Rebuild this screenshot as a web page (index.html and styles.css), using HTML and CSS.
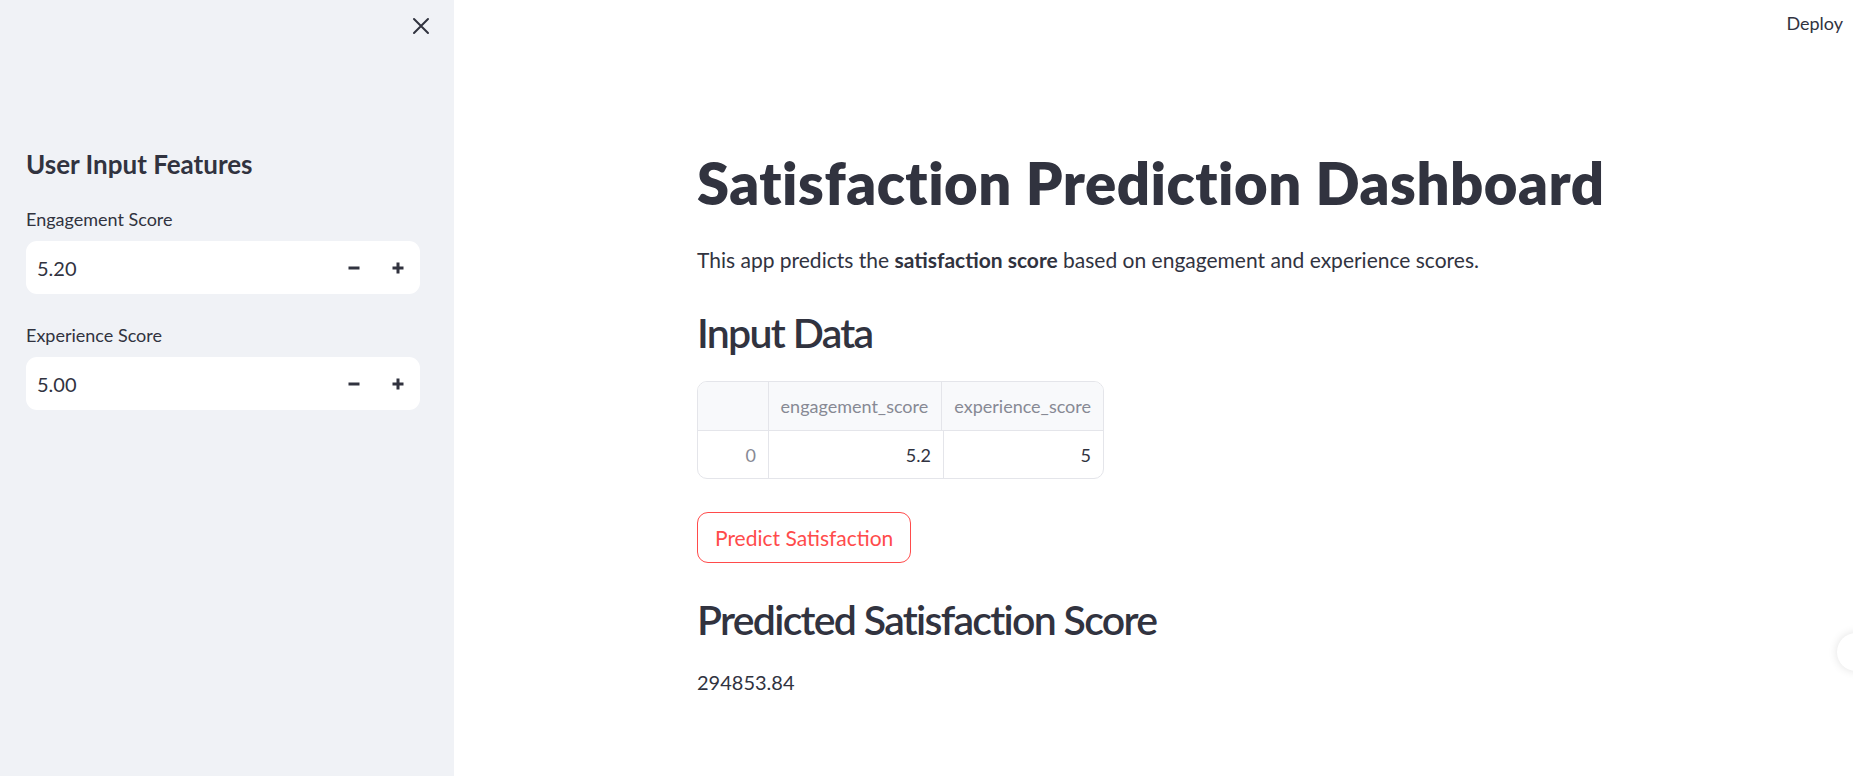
FILE: index.html
```html
<!DOCTYPE html>
<html lang="en">
<head>
<meta charset="utf-8">
<title>Satisfaction Prediction Dashboard</title>
<link rel="stylesheet" href="styles.css">
</head>
<body>
<div class="app">
  <aside class="sidebar">
    <div class="sidebar-top">
      <button class="close-btn" aria-label="Close sidebar">
        <svg width="18" height="18" viewBox="0 0 18 18"><path d="M2 2 L16 16 M16 2 L2 16" stroke="#31333f" stroke-width="2" stroke-linecap="round"/></svg>
      </button>
    </div>
    <div class="sidebar-content">
      <h2 class="side-title">User Input Features</h2>
      <div class="field">
        <label class="field-label">Engagement Score</label>
        <div class="num-input">
          <span class="num-value">5.20</span>
          <button class="step" aria-label="minus"><svg width="12" height="12" viewBox="0 0 12 12"><rect x="0.5" y="4.5" width="11" height="3" fill="#31333f"/></svg></button>
          <button class="step" aria-label="plus"><svg width="12" height="12" viewBox="0 0 12 12"><rect x="0.5" y="4.5" width="11" height="3" fill="#31333f"/><rect x="4.5" y="0.5" width="3" height="11" fill="#31333f"/></svg></button>
        </div>
      </div>
      <div class="field">
        <label class="field-label">Experience Score</label>
        <div class="num-input">
          <span class="num-value">5.00</span>
          <button class="step" aria-label="minus"><svg width="12" height="12" viewBox="0 0 12 12"><rect x="0.5" y="4.5" width="11" height="3" fill="#31333f"/></svg></button>
          <button class="step" aria-label="plus"><svg width="12" height="12" viewBox="0 0 12 12"><rect x="0.5" y="4.5" width="11" height="3" fill="#31333f"/><rect x="4.5" y="0.5" width="3" height="11" fill="#31333f"/></svg></button>
        </div>
      </div>
    </div>
  </aside>
  <main class="main">
    <header class="topbar"><span class="deploy">Deploy</span></header>
    <div class="content">
      <h1 class="title">Satisfaction Prediction Dashboard</h1>
      <p class="lead">This app predicts the <strong>satisfaction score</strong> based on engagement and experience scores.</p>
      <h2 class="h2 h2-input">Input Data</h2>
      <div class="table">
        <div class="row head">
          <div class="cell c0"></div>
          <div class="cell c1">engagement_score</div>
          <div class="cell c2">experience_score</div>
        </div>
        <div class="row">
          <div class="cell c0 idx">0</div>
          <div class="cell c1 num">5.2</div>
          <div class="cell c2 num">5</div>
        </div>
      </div>
      <button class="predict">Predict Satisfaction</button>
      <h2 class="h2 h2-pred">Predicted Satisfaction Score</h2>
      <p class="result">294853.84</p>
    </div>
    <div class="float-circle"></div>
  </main>
</div>
</body>
</html>
```

FILE: styles.css
```css
* { box-sizing: border-box; }
html, body { margin: 0; padding: 0; }
body {
  font-family: "Lato", "Liberation Sans", sans-serif;
  color: #31333f;
  background: #ffffff;
  width: 1853px;
  height: 776px;
  overflow: hidden;
}
.app { display: flex; height: 776px; }

.sidebar {
  width: 454px;
  flex: 0 0 454px;
  background: #f0f2f6;
  height: 776px;
  padding: 0 34px 0 26px;
}
.sidebar-top {
  display: flex;
  justify-content: flex-end;
  padding-top: 17px;
  height: 146px;
}
.close-btn {
  width: 18px; height: 18px; padding: 0; border: 0; background: none;
  margin-right: -10px;
  display: flex;
}
.side-title {
  margin: 0;
  font-size: 26px;
  font-weight: 700;
  line-height: 36px;
}
.field { margin-top: 24px; display: flex; flex-direction: column; }
.field + .field { margin-top: 28px; }
.field-label {
  font-size: 18px;
  line-height: 26px;
  margin-bottom: 9px;
}
.num-input {
  display: flex;
  align-items: center;
  height: 53px;
  background: #ffffff;
  border-radius: 11px;
  padding-left: 11px;
}
.num-value { flex: 1; font-size: 20px; }
.step {
  width: 44px; height: 53px; border: 0; background: none; padding: 0;
  display: flex; align-items: center; justify-content: center;
}

.main { flex: 1; position: relative; overflow: hidden; }
.topbar {
  display: flex;
  justify-content: flex-end;
  height: 48px;
  padding: 10px 10px 0 0;
}
.deploy { font-size: 18px; line-height: 26px; }
.content { width: 913px; margin: 0 auto; padding-top: 100px; }
.title {
  margin: 0;
  font-size: 58px;
  font-weight: 800;
  letter-spacing: 0.5px;
  line-height: 70px;
  white-space: nowrap;
}
.lead {
  margin: 25px 0 0;
  font-size: 21px;
  line-height: 34px;
}
.lead strong { font-weight: 700; }
.h2 {
  margin: 0;
  font-size: 41px;
  font-weight: 600;
  letter-spacing: -1.7px;
  line-height: 53px;
}
.h2-input { margin-top: 29px; }
.table {
  margin-top: 22px;
  width: 407px;
  border: 1px solid #e4e5ea;
  border-radius: 10px;
  overflow: hidden;
}
.row { display: flex; height: 47px; }
.row.head { background: #f8f9fb; border-bottom: 1px solid #e4e5ea; height: 49px; }
.cell {
  display: flex;
  align-items: center;
  padding: 0 12px;
  font-size: 18px;
}
.cell + .cell { border-left: 1px solid #e4e5ea; }
.c0 { width: 70px; }
.c1 { width: 175px; }
.c2 { flex: 1; }
.head .cell { color: #878994; }
.idx { justify-content: flex-end; color: #878994; }
.num { justify-content: flex-end; }

.predict {
  display: block;
  margin-top: 33px;
  height: 51px;
  padding: 0 17px;
  background: #ffffff;
  border: 1px solid #ff4b4b;
  border-radius: 11px;
  color: #ff4b4b;
  font-family: inherit;
  font-size: 21px;
}
.h2-pred { margin-top: 30px; }
.result {
  margin: 19px 0 0;
  font-size: 20px;
  line-height: 34px;
}
.float-circle {
  position: absolute;
  right: -22px;
  top: 633px;
  width: 38px;
  height: 38px;
  border-radius: 50%;
  background: #ffffff;
  box-shadow: 0 0 10px rgba(0,0,0,0.12);
}
```
